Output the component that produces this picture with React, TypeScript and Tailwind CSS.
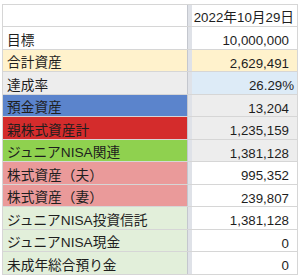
const rows = [
  { label: '目標', value: '10,000,000', lbg: 'bg-white', vbg: 'bg-white', pr: 'pr-[8px]' },
  { label: '合計資産', value: '2,629,491', lbg: 'bg-[#fff2cc]', vbg: 'bg-[#fff2cc]', pr: 'pr-[8px]' },
  { label: '達成率', value: '26.29%', lbg: 'bg-[#ededed]', vbg: 'bg-[#ddebf7]', pr: 'pr-[3px]' },
  { label: '預金資産', value: '13,204', lbg: 'bg-[#5b84cc]', vbg: 'bg-[#ededed]', pr: 'pr-[8px]' },
  { label: '親株式資産計', value: '1,235,159', lbg: 'bg-[#d42c2c]', vbg: 'bg-[#ededed]', pr: 'pr-[8px]' },
  { label: 'ジュニアNISA関連', value: '1,381,128', lbg: 'bg-[#8fd14f]', vbg: 'bg-[#ededed]', pr: 'pr-[8px]' },
  { label: '株式資産（夫）', value: '995,352', lbg: 'bg-[#ea9a9a]', vbg: 'bg-white', pr: 'pr-[8px]' },
  { label: '株式資産（妻）', value: '239,807', lbg: 'bg-[#ea9a9a]', vbg: 'bg-white', pr: 'pr-[8px]' },
  { label: 'ジュニアNISA投資信託', value: '1,381,128', lbg: 'bg-[#e2efda]', vbg: 'bg-white', pr: 'pr-[8px]' },
  { label: 'ジュニアNISA現金', value: '0', lbg: 'bg-[#e2efda]', vbg: 'bg-white', pr: 'pr-[8px]' },
  { label: '未成年総合預り金', value: '0', lbg: 'bg-[#e2efda]', vbg: 'bg-white', pr: 'pr-[8px]' },
]

function Row({ label, value, lbg, vbg, pr, h }: { label: React.ReactNode; value: React.ReactNode; lbg: string; vbg: string; pr: string; h: string }) {
  return (
    <div className={`flex ${h} border-b border-[#d6d6d6]`}>
      <div className={`w-[184px] flex items-end pl-[4px] pb-[1px] leading-none whitespace-nowrap overflow-hidden text-[13.7px] ${lbg}`}>
        {label}
      </div>
      <div className="w-[5px] border-l border-[#c4c7ce] bg-[#dfe2e8]" />
      <div className={`w-[105px] flex items-end justify-end pb-[1px] leading-none whitespace-nowrap ${pr} ${vbg}`}>
        {value}
      </div>
    </div>
  )
}

export default function App() {
  const date = (
    <span>
      2022<span className="text-[13.7px]">年</span>10<span className="text-[13.7px]">月</span>29<span className="text-[13.7px]">日</span>
    </span>
  )
  return (
    <div
      className="w-[300px] h-[280px] bg-white overflow-hidden pt-[4px] pl-[2px] text-[13.3px] text-[#1e1e1e]"
      style={{ fontFamily: '"Liberation Sans", "Noto Sans CJK JP", sans-serif' }}
    >
      <div className="w-[296px] border-l border-r border-t border-[#d6d6d6]">
        <Row label="" value={date} lbg="bg-white" vbg="bg-white" pr="pr-[3px]" h="h-[22px]" />
        {rows.map((r, i) => (
          <Row key={i} {...r} h="h-[22.5px]" />
        ))}
      </div>
    </div>
  )
}
